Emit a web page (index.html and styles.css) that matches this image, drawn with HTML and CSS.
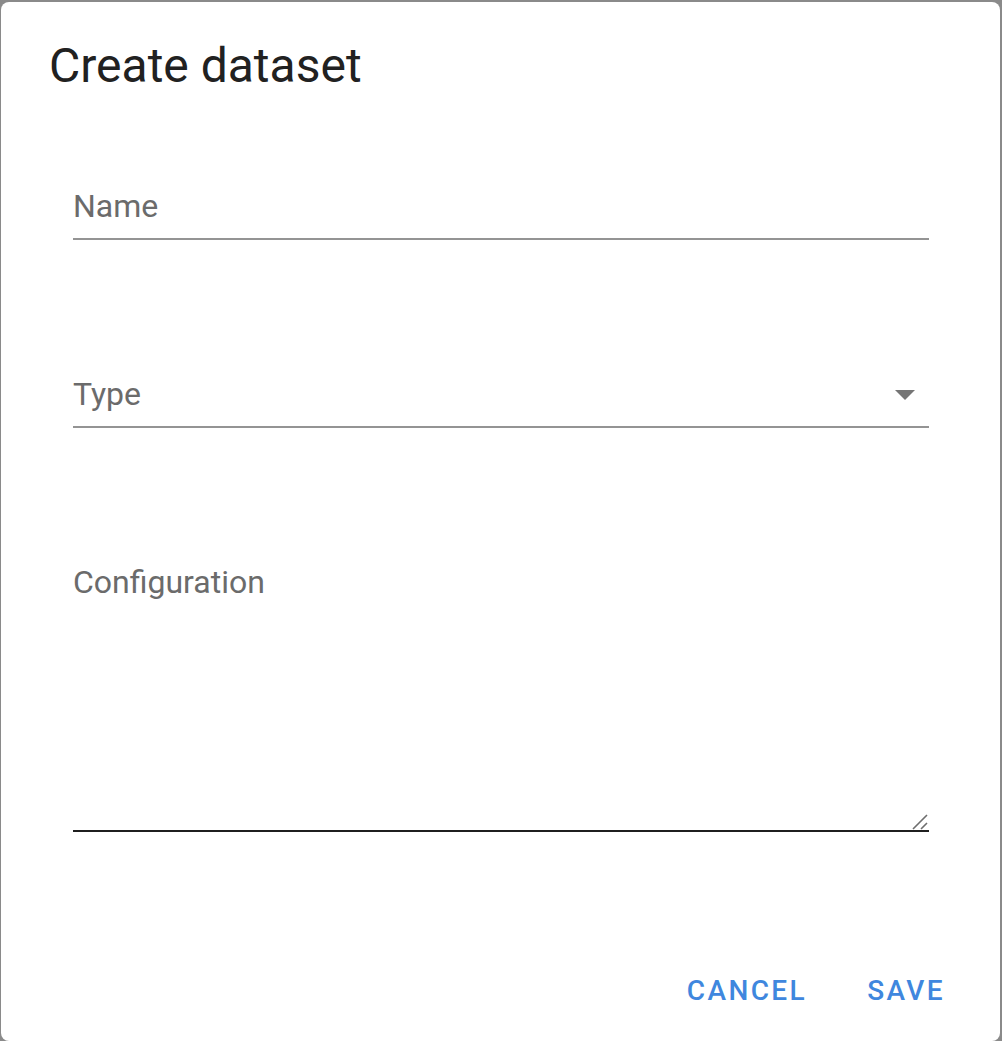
FILE: index.html
```html
<!DOCTYPE html>
<html lang="en">
<head>
<meta charset="utf-8">
<title>Create dataset</title>
<link rel="stylesheet" href="styles.css">
</head>
<body>
<div class="dialog">
  <h2 class="dialog-title">Create dataset</h2>
  <div class="dialog-content">
    <div class="field">
      <div class="field-label">Name</div>
    </div>
    <div class="field field-select">
      <div class="field-label">Type</div>
      <svg class="select-arrow" width="20" height="10" viewBox="0 0 20 10" aria-hidden="true"><path d="M0 0 L10 10 L20 0 Z" fill="#757575"/></svg>
    </div>
    <div class="field-area">
      <div class="field-label">Configuration</div>
      <div class="area-wrap">
        <textarea class="area-input" aria-label="Configuration"></textarea>
        <svg class="resize-grip" width="16" height="16" viewBox="0 0 16 16" aria-hidden="true">
          <path d="M1 15 L15 1 M9 15 L15 9" stroke="#6e6e6e" stroke-width="1.6" fill="none"/>
        </svg>
      </div>
    </div>
  </div>
  <div class="dialog-actions">
    <span class="action-btn">Cancel</span>
    <span class="action-btn">Save</span>
  </div>
</div>
</body>
</html>
```

FILE: styles.css
```css
html, body {
  margin: 0;
  padding: 0;
}
body {
  background: #8a8a8a;
  height: 1041px;
  overflow: hidden;
  font-family: Roboto, "Liberation Sans", sans-serif;
}
.dialog {
  margin: 2px 2px 0 1px;
  height: 1039px;
  background: #ffffff;
  border-radius: 8px;
  display: flex;
  flex-direction: column;
  box-sizing: border-box;
}
.dialog-title {
  margin: 32px 0 0 0;
  padding: 0 48px;
  font-size: 48px;
  line-height: 64px;
  font-weight: 400;
  color: #212121;
}
.dialog-content {
  margin-top: 88px;
  padding: 0 71px 0 72px;
  display: flex;
  flex-direction: column;
}
.field {
  border-bottom: 2px solid #949494;
  padding-bottom: 12px;
}
.field + .field,
.field + .field-area {
  margin-top: 134px;
}
.field-label {
  font-size: 32px;
  line-height: 40px;
  color: #6b6b6b;
}
.field-select {
  display: flex;
  justify-content: space-between;
  align-items: flex-start;
}
.select-arrow {
  margin-top: 16px;
  margin-right: 14px;
  display: block;
}
.area-wrap {
  position: relative;
}
.area-input {
  display: block;
  width: 100%;
  box-sizing: border-box;
  height: 230px;
  margin: 0;
  padding: 0;
  border: none;
  border-bottom: 2px solid #1f1f1f;
  outline: none;
  resize: none;
  background: transparent;
  font-family: inherit;
  font-size: 32px;
}
.resize-grip {
  position: absolute;
  right: 1px;
  bottom: 2px;
  display: block;
}
.dialog-actions {
  margin-top: 141px;
  padding-right: 55px;
  display: flex;
  justify-content: flex-end;
  gap: 60px;
}
.action-btn {
  font-size: 28px;
  line-height: 36px;
  font-weight: 500;
  letter-spacing: 2.4px;
  text-transform: uppercase;
  color: #3f87de;
}
```
